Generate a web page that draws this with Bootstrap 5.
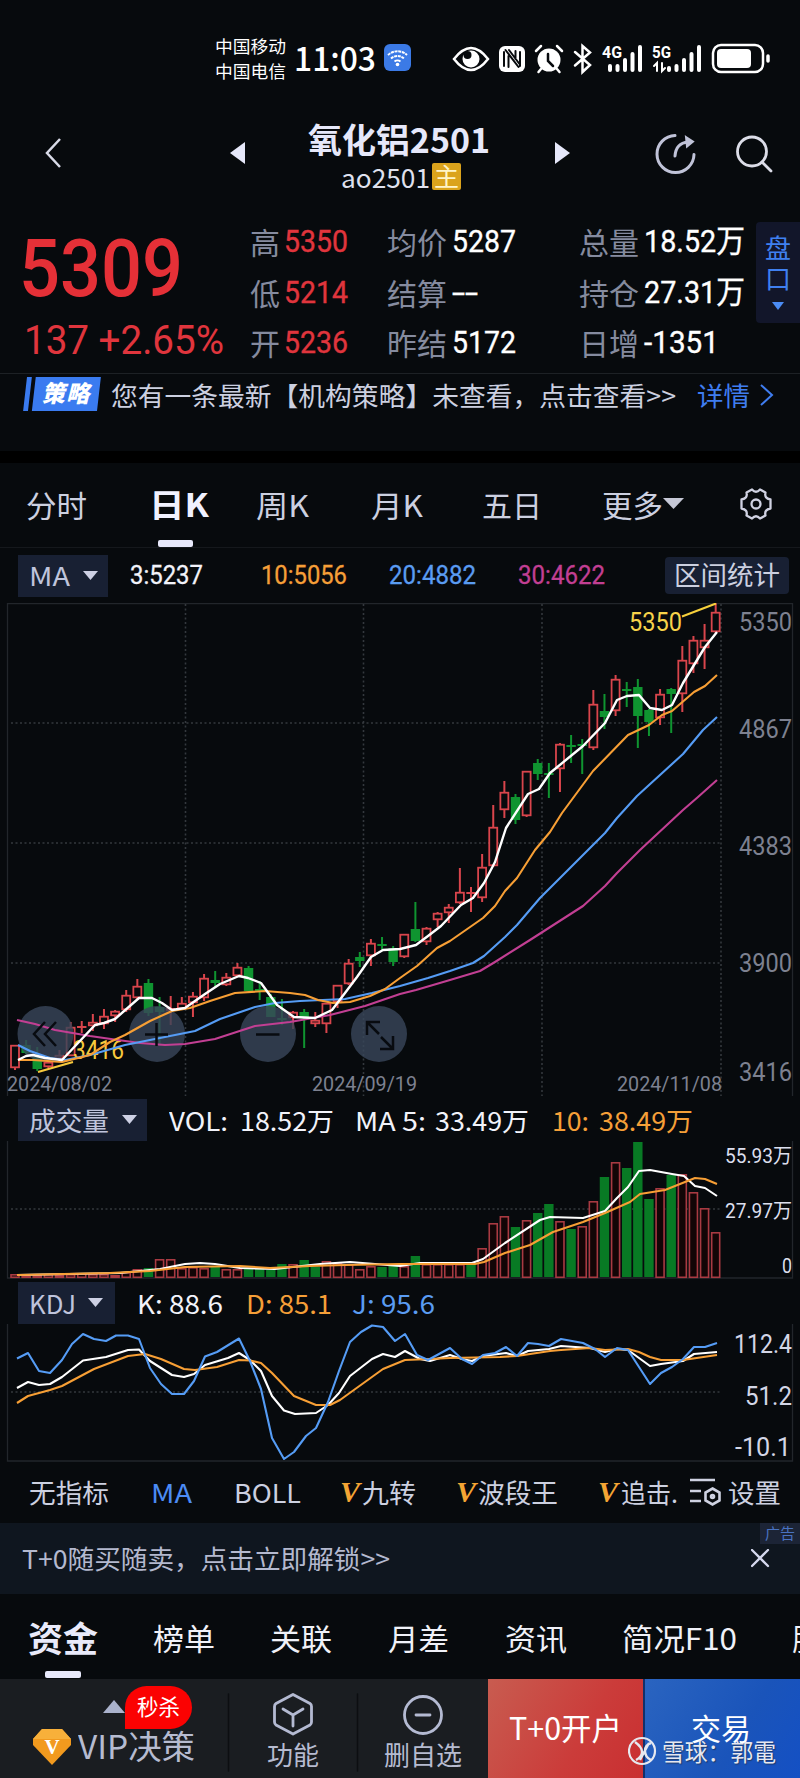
<!DOCTYPE html>
<html lang="zh-CN">
<head>
<meta charset="utf-8">
<title>氧化铝2501</title>
<link href="https://cdn.jsdelivr.net/npm/bootstrap@5.3.0/dist/css/bootstrap.min.css" rel="stylesheet">
<script src="https://cdn.jsdelivr.net/npm/bootstrap@5.3.0/dist/js/bootstrap.bundle.min.js"></script>
<style>
body{width:800px;height:1778px;overflow:hidden;background:#070a0d;color:#ccd0e0;font-family:"Noto Sans CJK SC",sans-serif;font-size:26px;line-height:1}
svg{display:block}
.lane{display:grid;align-items:center;white-space:nowrap;overflow:hidden}
.fit{display:inline-block;transform-origin:0 50%;white-space:nowrap;justify-self:start;line-height:1.2}
.din{font-family:Roboto,"Noto Sans CJK SC",sans-serif}
.status-lane{height:105px;padding-top:11px;grid-template-columns:215px 79px 90px 66px 350px;color:#fff}
.carrier{font-size:17.5px;line-height:25px}
.clock{font-size:33px;font-weight:500}
.head-lane{height:100px;grid-template-columns:44px 186px 60px 220px 44px 100px 80px 62px}
.title-box{width:220px;line-height:1}
.title-main{font-size:34px;font-weight:700;color:#e6e8fa}
.title-sub{font-size:26px;color:#dfe1ee}
.main-tag{background:#dba31c;color:#fff4c8;width:29px;height:27px;font-size:25px;line-height:25px;border-radius:2px}
.quote{height:168px;grid-template-columns:19px 231px 137px 192px 177px 44px}
.price{font-size:80px;font-weight:500;color:#e53037;line-height:80px;height:80px}
.chg{font-size:40px;color:#e0353d;line-height:40px}
.qcol{height:168px;padding-top:11px}
.qrow{height:50.5px;display:grid;align-items:center;color:#fff}
.qrow .lab{font-size:30px;color:#858b9f}
.qrow .val{font-size:32px;-webkit-text-stroke:.35px currentColor}
.qa{grid-template-columns:34px 1fr}.qb{grid-template-columns:65px 1fr}
.up{color:#e0353d}
.pk{background:#12162a;color:#3f80f0;height:101px;border-radius:4px 0 0 4px;font-size:26px;margin-top:-33px;align-self:center}
.strategy{height:78px;border-top:1px solid #1d2125;grid-template-columns:21px 90px 586px 62px 41px;padding-bottom:36px}
.gap-bar{height:12px;background:#000}
.tag-blue{height:35px}
.tabs-k{height:85px;border-bottom:1px solid #15181c;grid-template-columns:26px 123px 107px 115px 111px 120px 61px 76px 61px;font-size:30px;padding-bottom:3px;position:relative}
.ma-lane{height:55px;grid-template-columns:18px 112px 131px 128px 129px 147px 124px}
.pick{background:#182033;height:42px;color:#bfc4dc;padding-left:11px;align-items:center;display:flex;gap:13px}
.ma-lane .pick{width:90px}
.range-btn{background:#182033;height:37px;width:124px;border-radius:4px;padding-left:9px;line-height:34px}
.num{font-size:25.5px;-webkit-text-stroke:.3px currentColor}
.or{color:#f59f38}.bl{color:#5a9cf2}.mg{color:#c23f93}.wh{color:#f2f3fa}
.vol-lane{height:45px;grid-template-columns:18px 151px 71px 115px 80px 117px 47px 100px;padding-top:3px}
.kdj-lane{height:42px;grid-template-columns:18px 119px 109px 106px 100px}
.ind-lane{height:59px;grid-template-columns:29px 122px 83px 106px 22px 94px 22px 120px 23px 67px 40px 60px;padding-bottom:4px}
.vee{font-family:"Liberation Serif",serif;font-weight:700;font-style:italic;color:#f4a534;font-size:30px}
.ad{height:71px;background:#0f161f;position:relative;grid-template-columns:22px 729px 49px;color:#b4b9cf}
.ad>.fit{margin-top:-2px}
.ad-tag{position:absolute;right:0;top:0;width:40px;height:21px;background:#1c2436;color:#4972c0;font-size:15px;line-height:19px;text-align:center}
.tabs-b{height:85px;grid-template-columns:28px 125px 117px 118px 117px 117px 170px 60px;font-size:30px;position:relative;color:#f0f1f8}
.mark-line{position:absolute;bottom:0;height:7px;border-radius:2px;background:#e8e9fb}
.dock{height:99px;display:grid;grid-template-columns:228px 130px 130px 155px 157px;background:#1a1d21;position:relative;color:#b6bbd0}
.dock>div{position:relative}
.hot{position:absolute;left:125px;top:7px;width:67px;height:43px;background:#fb0202;border-radius:22px 22px 22px 0;color:#fff;font-size:21.5px;line-height:39px;text-align:center}
.open-btn{background:linear-gradient(120deg,#c85c50,#cb3c3a 60%,#c92f31);color:#fff;font-size:31px}
.trade-btn{background:linear-gradient(120deg,#2a64c0,#1a54ba 60%,#1450c4);color:#fff;font-size:30px;border-left:2px solid #12306a}
.wmark{left:628px;top:57px;color:#e6e8f0;font-size:24px;text-shadow:1px 1px 1px #2228}
.dlab{font-size:26px;line-height:34px}
svg text{font-family:Roboto,"Noto Sans CJK SC",sans-serif}
</style>
</head>
<body>
<div class="lane status-lane">
  <i></i>
  <div class="carrier"><span class="fit" data-w="71" style="line-height:25px">中国移动</span><br><span class="fit" data-w="71" style="line-height:25px">中国电信</span></div>
  <span class="fit clock" data-w="82">11:03</span>
  <svg width="28" height="28" viewBox="0 0 28 28" style="margin-top:-1px"><rect width="27" height="27" rx="6" fill="#3b7ae6"/><g fill="none" stroke="#fff" stroke-width="1.9"><path d="M4 11a14 14 0 0 1 19 0M7 14.500a9.500 9.500 0 0 1 13 0" stroke-dasharray="3 .7"/><path d="M10.500 17.500a5 5 0 0 1 6 0"/></g><circle cx="13.500" cy="20.500" r="1.800" fill="#fff"/></svg>
  <svg width="350" height="40" viewBox="450 40 350 40" style="margin-top:3px" fill="none" stroke="#fff" stroke-width="2.500" stroke-linecap="round">
    <path d="M454 59q17-22 34 0q-17 22-34 0z"/><circle cx="471" cy="59" r="8.500" fill="#fff" stroke="none"/><circle cx="467.500" cy="55" r="4" fill="#070a0d" stroke="none"/>
    <rect x="499" y="46" width="26" height="26" rx="6" fill="#fff" stroke="none"/><g stroke="#070a0d" stroke-width="2"><path d="M504 66V52M505.500 50l13 17M509 50l10.500 14M520 66V52M508.500 56v11M515.500 51v8"/></g>
    <circle cx="549" cy="60" r="11.500" fill="#fff" stroke="none"/><path d="M536 51l5-5M562 51l-5-5M541 69l-2.500 3M557 69l2.500 3"/><path d="M548 54v7l5 5" stroke="#070a0d"/>
    <path d="M575 52l15 13-7.500 7V46l7.500 6.500-15 13"/>
    <g stroke="none" fill="#fff" font-weight="700" font-size="17"><text x="602" y="58" textLength="20" lengthAdjust="spacingAndGlyphs">4G</text><text x="652" y="58" textLength="19" lengthAdjust="spacingAndGlyphs">5G</text></g>
    <path stroke-width="4" d="M610 66v4M617.500 66v4M625 60v10M632.500 54v16M640 47v23M669 68v2M676.500 66v4M684 60v10M691.500 54v16M699 47v23"/>
    <path stroke-width="2" d="M657 71v-8l-3 3M662 63v8l3-3"/>
    <rect x="713" y="45" width="50" height="27" rx="8"/><rect x="717" y="49" width="34" height="19" rx="4" fill="#fff" stroke="none"/><path d="M768 56v5" stroke-width="3.500"/>
  </svg>
</div>

<div class="lane head-lane">
  <i></i>
  <svg width="20" height="34" viewBox="0 0 20 34" style="margin-top:-4px"><path d="M16 3L3 17l13 14" fill="none" stroke="#d9dbe8" stroke-width="2.500"/></svg>
  <svg width="16" height="22" style="margin-top:-4px"><path d="M15 0v22L0 11z" fill="#e6e8fa"/></svg>
  <div class="title-box">
    <div style="padding-left:18px;height:43px"><span class="fit title-main" data-w="182">氧化铝2501</span></div>
    <div class="d-flex align-items-center" style="padding-left:51px;height:30px"><span class="fit title-sub" data-w="89" style="width:91px">ao2501</span><span class="main-tag text-center">主</span></div>
  </div>
  <svg width="60" height="22" style="margin-top:-4px;margin-left:45px"><path d="M0 0v22L15 11z" fill="#e6e8fa"/></svg>
  <i></i>
  <svg width="44" height="44" viewBox="654 133 44 44" style="margin-top:-2px" fill="none" stroke="#c0c3d8" stroke-width="3" stroke-linecap="round"><path d="M675 136.500a18.500 18.500 0 1 0 19 19"/><path d="M675 157q1-13 13-14"/><path d="M686 138l7 4.500-6 5z" fill="#c0c3d8" stroke-width="2"/></svg>
  <svg width="40" height="40" viewBox="735 133 40 40" style="margin-top:-5px" fill="none" stroke="#dcdde8" stroke-width="2.800" stroke-linecap="round"><circle cx="753" cy="151.500" r="14.500"/><path d="M763 162l9 9"/></svg>
</div>

<div class="lane quote">
  <i></i>
  <div class="din" style="padding-top:10px"><div class="price"><span class="fit" data-w="164" style="line-height:84px">5309</span></div><div class="chg" style="padding:14px 0 0 5px;height:54px"><span class="fit" data-w="200" style="line-height:40px">137 +2.65%</span></div></div>
  <div class="qcol">
    <div class="qrow qa"><span class="lab">高</span><span class="fit din val up" data-w="64">5350</span></div>
    <div class="qrow qa"><span class="lab">低</span><span class="fit din val up" data-w="64">5214</span></div>
    <div class="qrow qa"><span class="lab">开</span><span class="fit din val up" data-w="64">5236</span></div>
  </div>
  <div class="qcol">
    <div class="qrow qb"><span class="lab">均价</span><span class="fit din val" data-w="64">5287</span></div>
    <div class="qrow qb"><span class="lab">结算</span><span class="fit din val" data-w="26">--</span></div>
    <div class="qrow qb"><span class="lab">昨结</span><span class="fit din val" data-w="64">5172</span></div>
  </div>
  <div class="qcol">
    <div class="qrow qb"><span class="lab">总量</span><span class="fit din val" data-w="101">18.52万</span></div>
    <div class="qrow qb"><span class="lab">持仓</span><span class="fit din val" data-w="101">27.31万</span></div>
    <div class="qrow qb"><span class="lab">日增</span><span class="fit din val" data-w="75">-1351</span></div>
  </div>
  <div class="pk text-center pt-2"><div style="line-height:34px">盘</div><div style="line-height:27px">口</div><svg width="44" height="20" style="margin-top:10px"><path d="M16 1h12l-6 8z" fill="#4b8cf5"/></svg></div>
</div>

<div class="lane strategy">
  <i></i>
  <svg class="tag-blue" width="82" height="36" viewBox="22 376 82 36"><path d="M27 376h5l-4 35h-5zM36 376h67l-4 35H32z" fill="#3a7bf0"/><text x="42" y="402" font-size="24" font-weight="900" fill="#fff" font-style="italic" textLength="49">策略</text></svg>
  <span class="fit" data-w="565">您有一条最新【机构策略】未查看，点击查看&gt;&gt;</span>
  <span class="fit" data-w="53" style="color:#3f7df0">详情</span>
  <svg width="16" height="24"><path d="M2 2l11 10L2 22" fill="none" stroke="#3f7df0" stroke-width="2"/></svg>
</div>
<div class="gap-bar"></div>

<div class="lane tabs-k">
  <i></i>
  <span class="fit" data-w="61">分时</span>
  <span class="fit fw-bold" data-w="60" style="color:#f0f1ff;font-size:32px">日K</span>
  <span class="fit" data-w="53">周K</span>
  <span class="fit" data-w="52">月K</span>
  <span class="fit" data-w="60">五日</span>
  <span class="fit" data-w="61">更多</span>
  <svg width="22" height="12"><path d="M0 0h21L10.500 11z" fill="#c6c8d6"/></svg>
  <svg width="34" height="34" viewBox="-17 -17 34 34" fill="none" stroke="#d0d2e2" stroke-width="2.300" stroke-linejoin="round"><path d="M-4-14.500Q0-10 4-14.500L9.500-11.500Q8-5.500 14.500-4.500V4.500Q8 5.500 9.500 11.500L4 14.500Q0 10-4 14.500L-9.500 11.500Q-8 5.500-14.500 4.500V-4.500Q-8-5.500-9.500-11.500Z"/><circle r="4.500"/></svg>
  <b class="mark-line" style="left:158px;width:35px"></b>
</div>

<div class="lane ma-lane">
  <i></i>
  <div class="pick"><span class="fit" data-w="41" style="margin-top:-2px">MA</span><svg width="16" height="10"><path d="M0 0h15L7.500 9z" fill="#cdd0e4"/></svg></div>
  <span class="fit din num wh" data-w="73">3:5237</span>
  <span class="fit din num or" data-w="86">10:5056</span>
  <span class="fit din num bl" data-w="87">20:4882</span>
  <span class="fit din num mg" data-w="87">30:4622</span>
  <div class="range-btn"><span class="fit" data-w="106">区间统计</span></div>
</div>

<svg id="kline" width="800" height="493" viewBox="0 603 800 493"></svg>

<div class="lane vol-lane">
  <i></i>
  <div class="pick" style="width:129px"><span class="fit" data-w="80">成交量</span><svg width="16" height="10"><path d="M0 0h15L7.500 9z" fill="#cdd0e4"/></svg></div>
  <span class="fit wh" data-w="59">VOL:</span><span class="fit wh" data-w="94">18.52万</span>
  <span class="fit wh" data-w="71">MA 5:</span><span class="fit wh" data-w="94">33.49万</span>
  <span class="fit or" data-w="37">10:</span><span class="fit or" data-w="94">38.49万</span>
</div>
<svg id="volume" width="800" height="141" viewBox="0 1141 800 141"></svg>

<div class="lane kdj-lane">
  <i></i>
  <div class="pick" style="width:97px"><span class="fit" data-w="47">KDJ</span><svg width="16" height="10" style="margin-left:-1px"><path d="M0 0h15L7.500 9z" fill="#cdd0e4"/></svg></div>
  <span class="fit wh" data-w="86">K: 88.6</span><span class="fit or" data-w="86">D: 85.1</span><span class="fit bl" data-w="83">J: 95.6</span>
</div>
<svg id="kdj" width="800" height="140" viewBox="0 1324 800 140"></svg>

<div class="lane ind-lane">
  <i></i><span class="fit" data-w="80">无指标</span>
  <span class="fit" data-w="41" style="color:#4c8cf5">MA</span>
  <span class="fit" data-w="67">BOLL</span>
  <span class="fit vee" data-w="20">V</span><span class="fit" data-w="54">九转</span>
  <span class="fit vee" data-w="20">V</span><span class="fit" data-w="80">波段王</span>
  <span class="fit vee" data-w="20">V</span><span class="fit" data-w="57">追击.</span>
  <svg width="34" height="28" viewBox="689 1477 34 28" fill="none" stroke="#cfd2e2" stroke-width="2.600"><path d="M691 1479h25M691 1490h11M691 1500h11"/><path d="M713.500 1487.500l7 4v8l-7 4-7-4v-8z"/><circle cx="713.500" cy="1495.500" r="1.500"/></svg>
  <span class="fit" data-w="53">设置</span>
</div>

<div class="lane ad">
  <i></i><span class="fit" data-w="368">T+0随买随卖，点击立即解锁&gt;&gt;</span>
  <svg width="20" height="20"><path d="M1 1l16 16M17 1L1 17" stroke="#d5d8ee" stroke-width="2.300" stroke-linecap="round"/></svg>
  <span class="ad-tag">广告</span>
</div>

<div class="lane tabs-b">
  <i></i><span class="fit fw-bold" data-w="70" style="font-size:35px;color:#e9eafa">资金</span>
  <span class="fit" data-w="62">榜单</span><span class="fit" data-w="62">关联</span><span class="fit" data-w="61">月差</span><span class="fit" data-w="62">资讯</span><span class="fit" data-w="115">简况F10</span><span>股</span>
  <b class="mark-line" style="left:45px;width:36px;bottom:1px"></b>
</div>

<div class="dock">
  <div>
    <svg width="228" height="99" viewBox="0 1679 228 99"><path d="M103 1713h22l-11-13z" fill="#aab2cc"/><path d="M42 1729h20l9 10v6l-19 20-19-20v-6z" fill="#f29a1e"/><path d="M42 1729h20l9 10H33z" fill="#f8b03a"/><text x="44.500" y="1754" font-size="21" font-weight="700" fill="#fff" style="font-family:'Liberation Serif',serif">V</text></svg>
    <span class="hot">秒杀</span>
    <span class="fit position-absolute" data-w="117" style="left:78px;top:47px;font-size:33px">VIP决策</span>
  </div>
  <div class="d-flex flex-column align-items-center">
    <svg width="130" height="58" viewBox="228 1679 130 58" fill="none" stroke="#b4bad2" stroke-width="2.800" stroke-linejoin="round" stroke-linecap="round" overflow="visible"><path stroke="#0c0e11" stroke-width="1.500" d="M228.500 1694v77M357.500 1694v77"/><path d="M293 1694.500l17 9q1.500 1 1.500 3v15.500q0 2-1.500 3l-17 9-17-9q-1.500-1-1.500-3v-15.500q0-2 1.500-3z"/><path d="M283 1709l10 6 10-6M293 1715v11"/></svg>
    <span class="dlab">功能</span>
  </div>
  <div class="d-flex flex-column align-items-center">
    <svg width="130" height="58" viewBox="358 1679 130 58" fill="none" stroke="#b4bad2" stroke-width="2.800" stroke-linecap="round"><circle cx="423" cy="1715" r="18.500"/><path d="M416 1715h14"/></svg>
    <span class="dlab">删自选</span>
  </div>
  <div class="open-btn" style="padding:29px 0 0 21px"><span class="fit" data-w="113">T+0开户</span></div>
  <div class="trade-btn" style="padding:30px 0 0 46px"><span class="fit" data-w="60">交易</span></div>
  <div class="wmark d-flex align-items-center position-absolute">
    <svg width="34" height="30" viewBox="0 0 34 30" fill="none" stroke="#e6e8f0" stroke-width="2.200"><circle cx="14" cy="15" r="13"/><path d="M7 6q7 5 7 10t-6 8M23 7q-6 2-6 8t6 9M12 24l9-17" stroke-width="2.400"/></svg>
    <span class="fit" data-w="114">雪球：郭電</span>
  </div>
</div>

<script>
const X = i => 15 + 11.122 * i;
const UP = '#d9454c', DOWN = '#0f9430';
const line = (pts, c, w = 2.1) => `<polyline points="${pts}" fill="none" stroke="${c}" stroke-width="${w}" stroke-linejoin="round"/>`;
const dot = d => `<path d="${d}" fill="none" stroke="#34383d" stroke-width="1.6" stroke-dasharray="2 2.5"/>`;
const frame = d => `<path d="${d}" fill="none" stroke="#22262b" stroke-width="1.3"/>`;
const label = (x, y, w, t, c, s) => `<text x="${x}" y="${y}" fill="${c}" font-size="${s}" textLength="${w}" lengthAdjust="spacingAndGlyphs">${t}</text>`;

/* colour, body top, body bottom, high, low */
const candles = `r 1045 1068 1045 1070|g 1045 1053 1040 1054|g 1057 1069 1047 1071|r 1062 1067 1060 1068|r 1055 1059 1050 1061|r 1027 1056 1022 1056|r 1026 1028 1021 1033|r 1022 1026 1014 1031|r 1016 1024 1009 1029|r 1011 1016 1010 1022|r 995 1010 990 1012|r 986 998 979 999|g 983 1013 979 1016|g 1007 1012 997 1046|r 1008 1011 996 1025|r 1003 1009 997 1010|r 996 1003 992 1017|r 978 998 974 1001|g 980 983 971 988|r 977 985 973 986|r 967 976 963 977|g 968 991 966 991|g 989 992 981 1000|g 997 1017 994 1017|g 1018 1020 999 1025|r 1012 1018 1011 1029|g 1012 1017 1009 1048|r 1020 1024 1012 1027|r 1003 1024 1003 1033|r 985 1002 985 1008|r 963 984 959 985|g 957 961 952 967|r 943 956 939 966|g 944 946 937 951|g 948 962 946 966|r 934 957 934 958|g 929 941 902 942|r 928 942 927 945|r 913 920 912 927|r 907 913 904 923|r 892 903 868 904|r 892 894 887 912|r 867 898 854 902|r 827 866 805 867|r 792 810 781 818|g 797 820 794 824|r 771 816 771 817|g 763 774 759 780|g 773 775 763 798|r 744 769 743 792|g 745 747 735 763|g 744 746 739 774|r 704 748 690 750|g 711 717 694 729|r 679 711 675 716|g 689 691 682 707|g 687 716 679 748|g 710 722 709 736|r 694 718 689 725|g 689 694 688 733|r 660 694 646 712|r 640 664 636 673|r 640 648 624 669|r 612 632 603 633`.split('|').map(s => s.split(' '));
let k = frame('M7.500 1096V603.500H792.500V1096') + dot('M11 723H721M11 843H721M11 963H721M185.500 604V1096M363.500 604V1096M542 604V1096M721 604V1096');
candles.forEach(([c, t, b, h, l], i) => {
  const x = X(i), col = c === 'r' ? UP : DOWN;
  t = +t; b = +b;
  k += `<path d="M${x} ${h}V${t}M${x} ${b}V${l}" stroke="${col}" stroke-width="2"/>`;
  k += c === 'r' && b - t > 3
    ? `<rect x="${x - 4}" y="${t + .7}" width="8" height="${b - t - 1.4}" fill="#070a0d" stroke="${col}" stroke-width="1.8"/>`
    : `<rect x="${x - 4.7}" y="${t}" width="9.4" height="${b - t}" fill="${col}"/>`;
});
[45.5, 157, 268, 379].forEach(x => k += `<circle cx="${x}" cy="1034" r="28" fill="#384659" fill-opacity=".82"/>`);
k += label(73, 1059, 51, '3416', '#f7c93c', 25);
k += line('17,1020 35,1024 55,1030 90,1036 118,1040 140,1043 165,1045 185,1044 215,1039 255,1026 290,1022 330,1015 365,1006 400,994 416,990 450,980 480,971 495,962 530,940 583,906 605,886 617,873 640,850 683,810 698,797 717,780', '#c23f93');
k += line('18,1045 30,1051 50,1058 65,1060 90,1055 125,1045 160,1038 195,1031 220,1019 255,1007 275,1003 300,1001 345,999 372,993 400,986 428,978 450,971 473,963 484,956 505,937 517,925 540,898 567,871 588,850 605,833 617,818 637,796 683,754 703,730 717,717', '#559cf5');
k += line('18,1060 33,1060 62,1062 90,1055 110,1042 125,1035 150,1021 172,1011 190,1008 210,1001 235,993 265,991 290,993 305,995 318,1000 333,1003 350,1002 370,996 385,989 400,978 417,966 437,948 450,941 483,918 495,906 505,891 517,878 535,850 550,832 562,813 593,771 628,735 649,725 662,715 672,711 694,692 705,686 717,675', '#f79f35');
k += line('18,1060 26,1056 33,1055 45,1058 62,1060 78,1043 95,1025 104,1023 115,1019 139,998 152,998 162,1003 172,1010 185,1008 205,994 220,984 239,976 248,978 261,983 277,1005 294,1017 315,1018 332,1010 345,993 357,977 371,957 383,950 400,949 416,945 428,936 441,926 461,905 473,898 484,883 495,862 506,828 528,794 539,789 550,773 583,746 605,723 617,700 627,696 639,695 650,708 662,710 672,705 683,683 705,647 717,632', '#fff', 2.4);
k += line('38,1072 73,1062', '#f7c93c') + line('682,616.500 716,603.500', '#f7d03c') + label(629, 631, 53, '5350', '#f7d34a', 26);
[['5350', 631], ['4867', 738], ['4383', 855], ['3900', 972], ['3416', 1081]].forEach(([t, y]) => k += label(739, y, 53, t, '#7d8190', 25.5));
[['2024/08/02', 7], ['2024/09/19', 312], ['2024/11/08', 617]].forEach(([t, x]) => k += label(x, 1091, 105, t, '#7d8190', 21));
k += '<g fill="none" stroke="#080b10" stroke-width="2.500"><path d="M45 1022l-11 12 11 12M56 1022l-11 12 11 12M145 1034.500h23M156.500 1023v23M256 1034.500h23.500M367 1035v-13h13M367 1022l12 12M393 1036v13h-13M393 1049l-12-12"/></g>';
document.getElementById('kline').innerHTML = k;

const vols = 'r1274 r1275 r1275 r1274 r1275 r1274 r1273 r1274 r1274 r1275 r1272 r1269 g1268 r1259 r1259 r1268 r1267 r1268 g1266 r1269 r1269 g1268 g1269 g1270 g1264 r1264 g1260 g1267 r1261 r1263 r1264 r1269 r1266 g1267 g1266 r1266 g1256 r1264 r1264 r1264 r1264 g1264 r1248 r1223 r1216 g1227 r1220 g1213 g1204 r1221 g1229 r1226 r1201 g1177 r1162 g1168 g1142 g1199 r1188 g1175 r1174 r1192 r1208 r1232'.split(' ');
let v = frame('M7.500 1141V1278H792.500V1141') + dot('M11 1209H721');
vols.forEach((s, i) => {
  const y = +s.slice(1), x = X(i);
  v += s[0] === 'r'
    ? `<rect x="${x - 4}" y="${y + .8}" width="8" height="${Math.max(1, 1276.5 - y)}" fill="#120506" stroke="#a83a42" stroke-width="1.6"/>`
    : `<rect x="${x - 4.7}" y="${y}" width="9.4" height="${1277 - y}" fill="#087a24"/>`;
});
v += line('17,1275 120,1273 160,1269 185,1264 200,1263 215,1264 240,1268 275,1269 320,1264 350,1262 375,1264 400,1266 420,1263 472,1263 483,1259 505,1243 540,1220 550,1217 583,1218 605,1211 617,1198 628,1187 639,1171 650,1170 672,1174 684,1176 695,1186 705,1188 717,1196', '#fff');
v += line('17,1275 110,1273 150,1271 185,1267 240,1266 270,1268 310,1266 345,1265 400,1264 475,1264 484,1262 505,1253 530,1245 553,1232 583,1222 605,1213 630,1202 640,1194 665,1190 695,1178 705,1179 717,1184', '#f79f35');
v += label(725, 1163, 67, '55.93万', '#dcdfee', 20.5) + label(725, 1218, 67, '27.97万', '#dcdfee', 20.5) + label(782, 1273, 10, '0', '#dcdfee', 20.5);
document.getElementById('volume').innerHTML = v;

let d = frame('M7.500 1324V1461H792.500V1324') + dot('M11 1392H721');
d += line('17,1388 28,1382 39,1385 50,1384 62,1377 83,1360.500 106,1357 128,1350 139,1349.500 150,1361 172,1375 184,1377 194,1374 205,1365 228,1358 239,1353 250,1360 261,1371 272,1396 284,1410.500 295,1414 316,1413 328,1405 339,1393 350,1376 372,1359 383,1354 395,1357 405,1351 420,1359 430,1361 450,1355 462,1359 472,1361 483,1356 506,1353 517,1356 528,1351 549,1349 561,1346 590,1348 605,1352 617,1349 628,1350 650,1366 661,1364 683,1361 694,1354 717,1352', '#fff');
d += line('17,1403 28,1396 50,1390 62,1386 94,1369 128,1356 145,1354 161,1359 184,1369 195,1370 217,1367 239,1360 250,1360.500 261,1363 272,1373 294,1396 316,1405 330,1405 340,1400 383,1369 405,1360 430,1359 450,1358 500,1357 517,1356 550,1351 561,1350 590,1348 605,1350 628,1349 639,1352 650,1357 661,1360 683,1360 717,1355', '#f79f35');
d += line('17,1358.500 28,1353 39,1371 50,1373 62,1360 72,1344 83,1334 94,1339 106,1341 116,1335.500 128,1335.500 139,1339 150,1368 161,1384 172,1394 184,1394 194,1381 205,1356.500 217,1352 239,1338.500 250,1361 261,1389 272,1438 284,1459 294,1452 306,1436 316,1428 328,1402 339,1371 350,1342 361,1332 372,1325.500 383,1327 395,1341 405,1334 417,1355 428,1360 450,1348 462,1359 472,1364 483,1355 495,1353 506,1347 517,1356 528,1343 538,1344 549,1346 561,1339 583,1343 595,1349 605,1357 617,1348 628,1350 650,1384 661,1373 672,1367 683,1359 694,1347 705,1347 717,1343', '#559cf5');
d += label(734, 1353, 58, '112.4', '#d3d6e6', 25) + label(745, 1405, 47, '51.2', '#d3d6e6', 25) + label(735, 1456, 56, '-10.1', '#d3d6e6', 25);
document.getElementById('kdj').innerHTML = d;

/* condense each label to its column width */
document.querySelectorAll('.fit').forEach(e => {
  const r = document.createRange(); r.selectNodeContents(e);
  const w = r.getBoundingClientRect().width;
  if (w) e.style.transform = `scaleX(${e.dataset.w / w})`;
});
/* controls after a condensed caption keep their distance from its drawn edge */
document.querySelectorAll('.pick .fit').forEach(e => e.style.width = e.dataset.w + 'px');
</script>
</body>
</html>
